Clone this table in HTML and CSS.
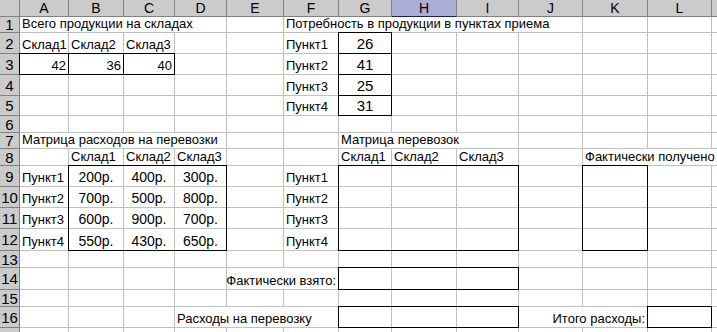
FILE: index.html
```html
<!DOCTYPE html>
<html lang="ru">
<head>
<meta charset="utf-8">
<title>Транспортная задача</title>
<link rel="stylesheet" href="styles.css">
</head>
<body>
<div class="sheet">
  <!-- header -->
  <div class="c ch corner"></div>
  <div class="c ch">A</div><div class="c ch">B</div><div class="c ch">C</div><div class="c ch">D</div>
  <div class="c ch">E</div><div class="c ch">F</div><div class="c ch">G</div><div class="c ch sel">H</div>
  <div class="c ch">I</div><div class="c ch">J</div><div class="c ch">K</div><div class="c ch">L</div>
  <div class="c ch"></div>

  <!-- row 1 -->
  <div class="c rh">1</div>
  <div class="c s4">Всего продукции на складах</div>
  <div class="c"></div>
  <div class="c s5">Потребность в продукции в пунктах приема</div>
  <div class="c"></div><div class="c"></div><div class="c"></div>

  <!-- row 2 -->
  <div class="c rh">2</div>
  <div class="c">Склад1</div><div class="c">Склад2</div><div class="c">Склад3</div>
  <div class="c"></div><div class="c"></div>
  <div class="c">Пункт1</div>
  <div class="c qty ctr bx t r b l">26</div>
  <div class="c"></div><div class="c"></div><div class="c"></div><div class="c"></div><div class="c"></div><div class="c"></div>

  <!-- row 3 -->
  <div class="c rh">3</div>
  <div class="c num bx t r b l">42</div><div class="c num bx t r b l">36</div><div class="c num bx t r b l">40</div>
  <div class="c"></div><div class="c"></div>
  <div class="c">Пункт2</div>
  <div class="c qty ctr bx t r b l">41</div>
  <div class="c"></div><div class="c"></div><div class="c"></div><div class="c"></div><div class="c"></div><div class="c"></div>

  <!-- row 4 -->
  <div class="c rh">4</div>
  <div class="c"></div><div class="c"></div><div class="c"></div><div class="c"></div><div class="c"></div>
  <div class="c">Пункт3</div>
  <div class="c qty ctr bx t r b l">25</div>
  <div class="c"></div><div class="c"></div><div class="c"></div><div class="c"></div><div class="c"></div><div class="c"></div>

  <!-- row 5 -->
  <div class="c rh">5</div>
  <div class="c"></div><div class="c"></div><div class="c"></div><div class="c"></div><div class="c"></div>
  <div class="c">Пункт4</div>
  <div class="c qty ctr bx t r b l">31</div>
  <div class="c"></div><div class="c"></div><div class="c"></div><div class="c"></div><div class="c"></div><div class="c"></div>

  <!-- row 6 -->
  <div class="c rh">6</div>
  <div class="c"></div><div class="c"></div><div class="c"></div><div class="c"></div><div class="c"></div><div class="c"></div>
  <div class="c"></div><div class="c"></div><div class="c"></div><div class="c"></div><div class="c"></div><div class="c"></div><div class="c"></div>

  <!-- row 7 -->
  <div class="c rh">7</div>
  <div class="c s4">Матрица расходов на перевозки</div>
  <div class="c"></div><div class="c"></div>
  <div class="c s3">Матрица перевозок</div>
  <div class="c"></div><div class="c"></div><div class="c"></div><div class="c"></div>

  <!-- row 8 -->
  <div class="c rh">8</div>
  <div class="c"></div>
  <div class="c">Склад1</div><div class="c">Склад2</div><div class="c">Склад3</div>
  <div class="c"></div><div class="c"></div>
  <div class="c">Склад1</div><div class="c">Склад2</div><div class="c">Склад3</div>
  <div class="c"></div>
  <div class="c s3">Фактически получено</div>

  <!-- row 9 -->
  <div class="c rh">9</div>
  <div class="c">Пункт1</div>
  <div class="c big ctr bx t l">200р.</div><div class="c big ctr bx t">400р.</div><div class="c big ctr bx t r">300р.</div>
  <div class="c"></div>
  <div class="c">Пункт1</div>
  <div class="c bx t l"></div><div class="c bx t"></div><div class="c bx t r"></div>
  <div class="c"></div>
  <div class="c bx t l r"></div>
  <div class="c"></div><div class="c"></div>

  <!-- row 10 -->
  <div class="c rh">10</div>
  <div class="c">Пункт2</div>
  <div class="c big ctr bx l">700р.</div><div class="c big ctr">500р.</div><div class="c big ctr bx r">800р.</div>
  <div class="c"></div>
  <div class="c">Пункт2</div>
  <div class="c bx l"></div><div class="c"></div><div class="c bx r"></div>
  <div class="c"></div>
  <div class="c bx l r"></div>
  <div class="c"></div><div class="c"></div>

  <!-- row 11 -->
  <div class="c rh">11</div>
  <div class="c">Пункт3</div>
  <div class="c big ctr bx l">600р.</div><div class="c big ctr">900р.</div><div class="c big ctr bx r">700р.</div>
  <div class="c"></div>
  <div class="c">Пункт3</div>
  <div class="c bx l"></div><div class="c"></div><div class="c bx r"></div>
  <div class="c"></div>
  <div class="c bx l r"></div>
  <div class="c"></div><div class="c"></div>

  <!-- row 12 -->
  <div class="c rh">12</div>
  <div class="c">Пункт4</div>
  <div class="c big ctr bx l b">550р.</div><div class="c big ctr bx b">430р.</div><div class="c big ctr bx r b">650р.</div>
  <div class="c"></div>
  <div class="c">Пункт4</div>
  <div class="c bx l b"></div><div class="c bx b"></div><div class="c bx r b"></div>
  <div class="c"></div>
  <div class="c bx l r b"></div>
  <div class="c"></div><div class="c"></div>

  <!-- row 13 -->
  <div class="c rh">13</div>
  <div class="c"></div><div class="c"></div><div class="c"></div><div class="c"></div><div class="c"></div><div class="c"></div>
  <div class="c"></div><div class="c"></div><div class="c"></div><div class="c"></div><div class="c"></div><div class="c"></div><div class="c"></div>

  <!-- row 14 -->
  <div class="c rh">14</div>
  <div class="c"></div><div class="c"></div><div class="c"></div><div class="c"></div>
  <div class="c s2 num">Фактически взято:</div>
  <div class="c bx t l b"></div><div class="c bx t b"></div><div class="c bx t r b"></div>
  <div class="c"></div><div class="c"></div><div class="c"></div><div class="c"></div>

  <!-- row 15 -->
  <div class="c rh">15</div>
  <div class="c"></div><div class="c"></div><div class="c"></div><div class="c"></div><div class="c"></div><div class="c"></div>
  <div class="c"></div><div class="c"></div><div class="c"></div><div class="c"></div><div class="c"></div><div class="c"></div><div class="c"></div>

  <!-- row 16 -->
  <div class="c rh">16</div>
  <div class="c"></div><div class="c"></div><div class="c"></div>
  <div class="c s3">Расходы на перевозку</div>
  <div class="c bx t l b"></div><div class="c bx t b"></div><div class="c bx t r b"></div>
  <div class="c s2 num">Итого расходы:</div>
  <div class="c bx t r b l"></div>
  <div class="c"></div>

  <!-- row 17 (partially visible) -->
  <div class="c rh"></div>
  <div class="c"></div><div class="c"></div><div class="c"></div><div class="c"></div><div class="c"></div><div class="c"></div>
  <div class="c"></div><div class="c"></div><div class="c"></div><div class="c"></div><div class="c"></div><div class="c"></div><div class="c"></div>
</div>
</body>
</html>
```

FILE: styles.css
```css
html, body {
  margin: 0;
  padding: 0;
  background: #ffffff;
  overflow: hidden;
}

body {
  font-family: "Liberation Sans", Arial, sans-serif;
  color: #000;
}

.sheet {
  display: grid;
  width: max-content;
  grid-template-columns: 20px 49px 55px 51px 52px 57px 55px 53px 65px 62px 64px 65px 64px 60px;
  grid-template-rows: 17px 16px 21px 21px 21px 20px 17px 16px 17px 21px 21px 21px 22px 17px 22px 17px 21px 20px;
}

.c {
  box-sizing: border-box;
  border-right: 1px solid #c0c0c0;
  border-bottom: 1px solid #c0c0c0;
  font-size: 13px;
  line-height: 15px;
  white-space: nowrap;
  display: flex;
  align-items: flex-end;
  justify-content: flex-start;
  padding: 0 2px 1px 2px;
  min-width: 0;
}

.ch,
.rh {
  background: #cbcbcb;
  border-right: 1px solid #808080;
  border-bottom: 1px solid #808080;
  justify-content: center;
  align-items: center;
  font-size: 14px;
  padding: 0;
  color: #000;
}

.rh {
  font-size: 15px;
}

.sel {
  background: #adadd9;
  border-bottom-color: #1c1c5c;
}

.s2 { grid-column: span 2; }
.s3 { grid-column: span 3; }
.s4 { grid-column: span 4; }
.s5 { grid-column: span 5; }

.num { justify-content: flex-end; }
.ctr { justify-content: center; }
.big { font-size: 14px; }
.qty { font-size: 15px; line-height: 17px; }

.bx { position: relative; }
.bx::after {
  content: "";
  position: absolute;
  top: -1px;
  left: -1px;
  right: -1px;
  bottom: -1px;
  border: 0 solid #000;
  pointer-events: none;
}
.t::after { border-top-width: 1px; }
.r::after { border-right-width: 1px; }
.b::after { border-bottom-width: 1px; }
.l::after { border-left-width: 1px; }
```
